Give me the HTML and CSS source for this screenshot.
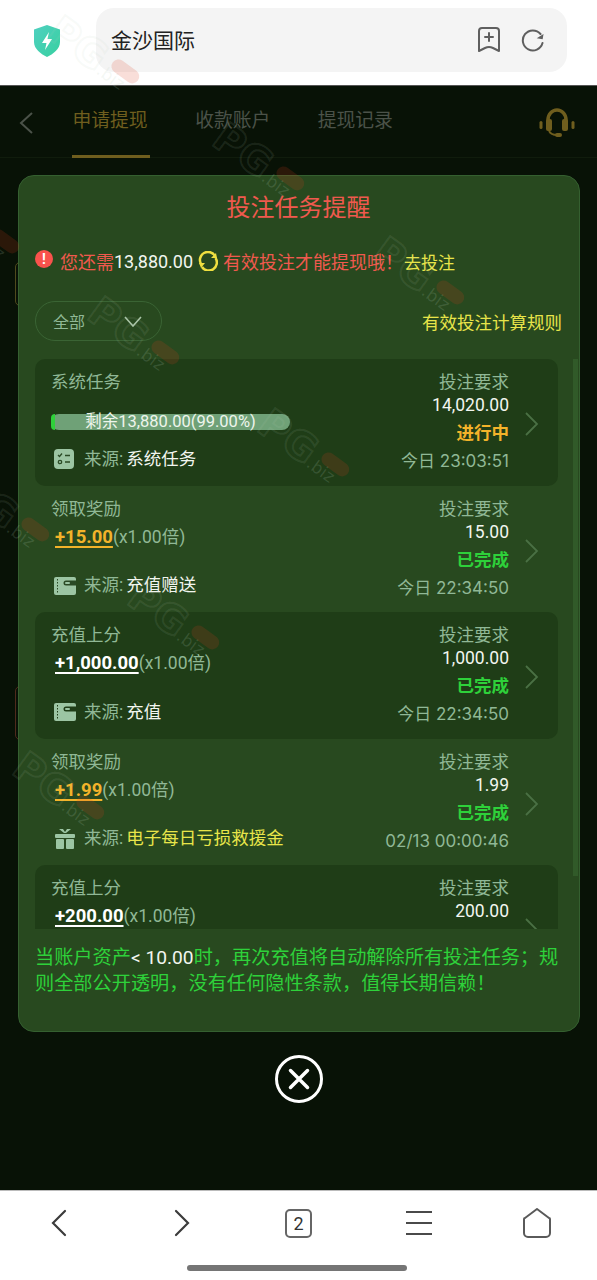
FILE: index.html
```html
<!DOCTYPE html>
<html lang="zh">
<head>
<meta charset="utf-8">
<title>金沙国际</title>
<link rel="stylesheet" href="styles.css">
</head>
<body>
<div class="app">
  <header class="topbar">
    <svg class="shield" width="28" height="34" viewBox="2 0 26 34"><defs><linearGradient id="sg" x1="0" y1="0" x2="1" y2="1"><stop offset="0" stop-color="#4fd0c0"/><stop offset="1" stop-color="#38d0a0"/></linearGradient></defs><path d="M15 1 L28 5.500 V18 C28 25 21 30 15 33 C9 30 2 25 2 18 V5.500 Z" fill="url(#sg)"/><path d="M17 8 L10 19 H14.500 L13 26 L20 15 H15.500 Z" fill="#fff"/></svg>
    <div class="address">
      <span class="address-text">金沙国际</span>
      <svg width="26" height="28" viewBox="0 0 26 28" fill="none" stroke="#5f5f5f" stroke-width="2" stroke-linejoin="round" stroke-linecap="round"><path d="M3 5 a3 3 0 0 1 3 -3 H20 a3 3 0 0 1 3 3 V25 L17 22 Q13 20 9 22 L3 25 Z"/><path d="M13 7 V15 M9 11 H17"/></svg>
      <svg class="reload" width="24" height="24" viewBox="0 0 24 24" fill="none" stroke="#5f5f5f" stroke-width="2" stroke-linecap="round"><path d="M19.500 6 A10 10 0 1 0 21.500 15"/><path d="M16 11 L22 11 L22 5.500 Z" fill="#5f5f5f" stroke="none" transform="rotate(10 20 9)"/></svg>
    </div>
  </header>

  <main class="page">
    <nav class="tabs">
      <svg class="tabs-back" width="14" height="24" viewBox="0 0 14 24" fill="none" stroke="#4b5249" stroke-width="2"><path d="M13 2 L2 12 L13 22"/></svg>
      <span class="tab tab-active">申请提现</span>
      <span class="tab">收款账户</span>
      <span class="tab">提现记录</span>
      <svg class="tabs-support" width="36" height="32" viewBox="0 0 36 32" fill="none"><path d="M9 21 V13 a9 10 0 0 1 18 0 V21" stroke="#6f5e1e" stroke-width="3.500"/><rect x="7" y="12" width="6" height="12" rx="2" fill="#6f5e1e"/><rect x="23" y="12" width="6" height="12" rx="2" fill="#6f5e1e"/><rect x="0.500" y="14" width="3" height="8" rx="1.500" fill="#6f5e1e"/><rect x="32.500" y="14" width="3" height="8" rx="1.500" fill="#6f5e1e"/><path d="M10 24 Q12 28 18 28" stroke="#6f5e1e" stroke-width="1.800"/><rect x="16" y="26" width="7" height="4" rx="2" fill="#6f5e1e"/></svg>
    </nav>
    <span class="bg-stub bg-stub-top"></span>
    <span class="bg-stub bg-stub-low"></span>

    <div class="overlay">
      <section class="modal">
        <h1 class="modal-title">投注任务提醒</h1>
        <div class="notice">
          <span class="notice-icon">!</span>
          <span class="red">您还需</span><span class="white">13,880.00</span>
          <svg class="notice-spin" width="20" height="20" viewBox="0 0 20 20" fill="none" stroke="#f0e040" stroke-width="2.500"><path d="M3 13 A8 8 0 0 1 17 5"/><path d="M17.500 7 A8 8 0 0 1 4 16"/><path d="M1 12 H7 L3 17 Z" fill="#f0e040" stroke="none"/><path d="M13 7 H19 L18 2 Z" fill="#f0e040" stroke="none"/></svg>
          <span class="red">有效投注才能提现哦！</span>
          <span class="yellow notice-go">去投注</span>
        </div>
        <div class="filter">
          <div class="select"><span>全部</span><svg width="18" height="11" viewBox="0 0 18 11" fill="none" stroke="#a9c4a6" stroke-width="1.600"><path d="M1 1 L9 10 L17 1"/></svg></div>
          <span class="yellow rule-link">有效投注计算规则</span>
        </div>

        <div class="list">
          <article class="row row-dark">
            <div class="row-main">
              <div class="muted">系统任务</div>
              <div class="progress"><span class="progress-fill"></span><span class="progress-text">剩余13,880.00(99.00%)</span></div>
              <div class="source">
                <span class="src-box"><svg width="20" height="20" viewBox="0 0 20 20"><rect width="20" height="20" rx="4" fill="#9cc5a3"/><path d="M4 6 L5.500 7.500 L8 4.500 M11 6.500 H16 M11 13 H16" fill="none" stroke="#2a4a25" stroke-width="1.300"/><circle cx="6" cy="13" r="1.700" fill="none" stroke="#2a4a25" stroke-width="1.300"/></svg></span>
                <span class="muted src-label">来源:</span><span class="white">系统任务</span>
              </div>
            </div>
            <div class="row-side">
              <div class="muted">投注要求</div>
              <div class="white">14,020.00</div>
              <div class="state state-doing">进行中</div>
              <div class="muted state-time">今日 23:03:51</div>
            </div>
            <svg class="row-arrow" width="14" height="24" viewBox="0 0 14 24" fill="none" stroke="#4a7044" stroke-width="1.800"><path d="M1 1 L12 12 L1 23"/></svg>
          </article>

          <article class="row">
            <div class="row-main">
              <div class="muted">领取奖励</div>
              <div class="amount-line"><span class="amount amount-gold">+15.00</span><span class="muted">(x1.00倍)</span></div>
              <div class="source">
                <span class="src-box"><svg width="22" height="18" viewBox="0 0 22 18"><rect width="22" height="18" rx="2" fill="#9cc5a3"/><path d="M22 3.500 H12 a2.500 2.500 0 0 0 0 5 H22 Z" fill="#2a4a25"/><rect x="11" y="5" width="5" height="2" rx="1" fill="#9cc5a3"/><path d="M3.500 2 V16" stroke="#2a4a25" stroke-dasharray="1.500 1.500"/></svg></span>
                <span class="muted src-label">来源:</span><span class="white">充值赠送</span>
              </div>
            </div>
            <div class="row-side">
              <div class="muted">投注要求</div>
              <div class="white">15.00</div>
              <div class="state state-done">已完成</div>
              <div class="muted state-time">今日 22:34:50</div>
            </div>
            <svg class="row-arrow" width="14" height="24" viewBox="0 0 14 24" fill="none" stroke="#4a7044" stroke-width="1.800"><path d="M1 1 L12 12 L1 23"/></svg>
          </article>

          <article class="row row-dark">
            <div class="row-main">
              <div class="muted">充值上分</div>
              <div class="amount-line"><span class="amount">+1,000.00</span><span class="muted">(x1.00倍)</span></div>
              <div class="source">
                <span class="src-box"><svg width="22" height="18" viewBox="0 0 22 18"><rect width="22" height="18" rx="2" fill="#9cc5a3"/><path d="M22 3.500 H12 a2.500 2.500 0 0 0 0 5 H22 Z" fill="#1f3d17"/><rect x="11" y="5" width="5" height="2" rx="1" fill="#9cc5a3"/><path d="M3.500 2 V16" stroke="#1f3d17" stroke-dasharray="1.500 1.500"/></svg></span>
                <span class="muted src-label">来源:</span><span class="white">充值</span>
              </div>
            </div>
            <div class="row-side">
              <div class="muted">投注要求</div>
              <div class="white">1,000.00</div>
              <div class="state state-done">已完成</div>
              <div class="muted state-time">今日 22:34:50</div>
            </div>
            <svg class="row-arrow" width="14" height="24" viewBox="0 0 14 24" fill="none" stroke="#4a7044" stroke-width="1.800"><path d="M1 1 L12 12 L1 23"/></svg>
          </article>

          <article class="row">
            <div class="row-main">
              <div class="muted">领取奖励</div>
              <div class="amount-line"><span class="amount amount-gold">+1.99</span><span class="muted">(x1.00倍)</span></div>
              <div class="source">
                <span class="src-box"><svg width="22" height="22" viewBox="0 0 22 22" fill="#9cc5a3"><rect x="1" y="6" width="20" height="4" rx="1"/><rect x="2" y="11" width="8" height="10" rx="1"/><rect x="12" y="11" width="8" height="10" rx="1"/><path d="M10 5 L5 1 H9 L11 4 L13 1 H17 L12 5 Z"/></svg></span>
                <span class="muted src-label">来源:</span><span class="yellow">电子每日亏损救援金</span>
              </div>
            </div>
            <div class="row-side">
              <div class="muted">投注要求</div>
              <div class="white">1.99</div>
              <div class="state state-done">已完成</div>
              <div class="muted state-time">02/13 00:00:46</div>
            </div>
            <svg class="row-arrow" width="14" height="24" viewBox="0 0 14 24" fill="none" stroke="#4a7044" stroke-width="1.800"><path d="M1 1 L12 12 L1 23"/></svg>
          </article>

          <article class="row row-dark">
            <div class="row-main">
              <div class="muted">充值上分</div>
              <div class="amount-line"><span class="amount">+200.00</span><span class="muted">(x1.00倍)</span></div>
            </div>
            <div class="row-side">
              <div class="muted">投注要求</div>
              <div class="white">200.00</div>
            </div>
            <svg class="row-arrow" width="14" height="24" viewBox="0 0 14 24" fill="none" stroke="#4a7044" stroke-width="1.800"><path d="M1 1 L12 12 L1 23"/></svg>
          </article>
        </div>
        <span class="scrollbar"></span>

        <p class="footnote">当账户资产<span class="white">&lt; 10.00</span>时，再次充值将自动解除所有投注任务；规则全部公开透明，没有任何隐性条款，值得长期信赖！</p>
      </section>
      <svg class="close" width="48" height="48" viewBox="0 0 48 48" fill="none" stroke="#fff"><circle cx="24" cy="24" r="22.500" stroke-width="3"/><path d="M15.500 15.500 L32.500 32.500 M32.500 15.500 L15.500 32.500" stroke-width="3.500" stroke-linecap="round"/></svg>
    </div>
  </main>

  <footer class="bottombar">
    <div class="bottom-icons">
      <svg width="18" height="28" viewBox="0 0 18 28" fill="none" stroke="#3c3c3c" stroke-width="2.200" stroke-linecap="round"><path d="M15 2 L3 14 L15 26"/></svg>
      <svg class="icon-forward" width="18" height="28" viewBox="0 0 18 28" fill="none" stroke="#3c3c3c" stroke-width="2.200" stroke-linecap="round"><path d="M3 2 L15 14 L3 26"/></svg>
      <span class="tabcount">2</span>
      <svg width="26" height="26" viewBox="0 0 26 26" fill="none" stroke="#4a4a4a" stroke-width="2"><path d="M0 2 H26 M0 13 H26 M0 24 H26"/></svg>
      <svg class="icon-home" width="28" height="30" viewBox="0 0 28 30" fill="none" stroke="#5a5a5a" stroke-width="2" stroke-linejoin="round"><path d="M14 1 L26 10 a1 1 0 0 1 1 1 V25 a4 4 0 0 1 -4 4 H5 a4 4 0 0 1 -4 -4 V11 a1 1 0 0 1 1 -1 Z"/></svg>
    </div>
    <span class="home-indicator"></span>
  </footer>

  <div class="watermarks" aria-hidden="true">
    <span class="wm wm-1">PG<i>.biz</i></span>
    <span class="wm wm-2">PG<i>.biz</i></span>
    <span class="wm wm-3">PG<i>.biz</i></span>
    <span class="wm wm-4">PG<i>.biz</i></span>
    <span class="wm wm-5">PG<i>.biz</i></span>
    <span class="wm wm-6">PG<i>.biz</i></span>
    <span class="wm wm-7">PG<i>.biz</i></span>
    <span class="wm wm-8">PG<i>.biz</i></span>
    <span class="wm wm-9">PG<i>.biz</i></span>
  </div>
</div>
</body>
</html>
```

FILE: styles.css
```css
* { box-sizing: border-box; }
html, body { margin: 0; padding: 0; }
body {
  font-family: Roboto, "Noto Sans CJK SC", "Noto Sans", sans-serif;
  background: #fff;
}
.app {
  position: relative;
  width: 597px;
  height: 1280px;
  overflow: hidden;
  display: flex;
  flex-direction: column;
}

/* browser top bar */
.topbar {
  height: 85px;
  flex: none;
  display: flex;
  align-items: flex-start;
  background: #fff;
  padding: 8px 30px 0 33px;
  gap: 35px;
}
.shield { margin-top: 16px; flex: none; }
.address {
  flex: 1;
  height: 64px;
  border-radius: 18px;
  background: #f4f4f4;
  display: flex;
  align-items: center;
  padding: 0 22px 0 15px;
  gap: 19px;
}
.address-text { flex: 1; font-size: 21px; color: #222; margin-top: -3px; }

/* dimmed page */
.page {
  position: relative;
  flex: 1;
  background: #081206;
  border-top: 1px solid #555;
}
.tabs {
  height: 72px;
  display: flex;
  align-items: flex-start;
  padding: 23px 22px 0 19px;
  border-bottom: 1px solid #101c0c;
  color: #4b5249;
  font-size: 18.800px;
  gap: 47.500px;
}
.tabs-back { margin-right: -8px; margin-top: 2px; }
.tab { position: relative; line-height: 24px; }
.tab-active { color: #6f5e1e; }
.tab-active::after {
  content: "";
  position: absolute;
  left: -1px;
  right: -2px;
  top: 46px;
  height: 3px;
  background: #6f5e1e;
}
.tabs-support { margin-left: auto; margin-top: -2px; }
.bg-stub {
  position: absolute;
  left: 15px;
  width: 6px;
  border: 1px solid #4f4a1c;
  border-radius: 5px 0 0 5px;
}
.bg-stub-top { top: 176px; height: 44px; }
.bg-stub-low { top: 600px; height: 54px; border-color: #4f2a1c; }

/* modal */
.overlay {
  position: absolute;
  inset: 0;
  padding: 89px 17px 0 18px;
  display: flex;
  flex-direction: column;
  align-items: center;
}
.modal {
  position: relative;
  width: 100%;
  height: 857px;
  background: #28491f;
  border: 1px solid #356030;
  border-radius: 16px;
  padding: 15px 17px 0 16px;
  display: flex;
  flex-direction: column;
  color: #90b896;
}
.modal-title {
  margin: 0;
  font-size: 24px;
  line-height: 34px;
  font-weight: 400;
  text-align: center;
  color: #f0594e;
}
.notice {
  display: flex;
  align-items: center;
  margin-top: 22px;
  height: 28px;
  font-size: 18px;
  white-space: nowrap;
}
.notice-icon {
  width: 18px;
  height: 18px;
  margin-right: 7px;
  margin-top: -4px;
  border-radius: 50%;
  background: #f9524c;
  color: #fff;
  font-size: 14px;
  font-weight: 700;
  line-height: 18px;
  text-align: center;
}
.notice-spin { margin: 0 5px 0 5px; }
.notice-go { margin-left: 1px; font-size: 17px; }
.red { color: #f0594e; }
.white { color: #f2f6f0; }
.yellow { color: #e8e54a; }
.muted { color: #90b896; }

.filter {
  display: flex;
  align-items: center;
  justify-content: space-between;
  margin-top: 26px;
  font-size: 17.500px;
}
.select {
  width: 127px;
  height: 40px;
  border: 1px solid #3a6434;
  border-radius: 20px;
  display: flex;
  align-items: center;
  gap: 39px;
  padding-left: 17px;
  font-size: 16px;
  color: #90b896;
}

.list {
  margin-top: 18px;
  height: 570px;
  overflow: hidden;
  margin-right: 4px;
  flex: none;
}
.row {
  height: 126.500px;
  border-radius: 10px;
  display: flex;
  font-size: 17.500px;
  line-height: 23px;
  padding: 12px 18px 0 16px;
  position: relative;
}
.row-dark { background: #1f3d17; }
.row-main { flex: 1; display: flex; flex-direction: column; }
.row-side {
  text-align: right;
  margin-right: 31px;
  display: flex;
  flex-direction: column;
}
.row-arrow { position: absolute; right: 19px; top: 53px; }
.state { font-weight: 700; margin-top: 5px; }
.state-time {
  margin-top: 5px;
  font-family: Inter, "Noto Sans CJK SC", sans-serif;
  font-size: 17px;
}
.state-doing { color: #f3b32a; }
.state-done { color: #2ed13a; }

.progress {
  position: relative;
  width: 239px;
  height: 16px;
  margin-top: 20px;
  border-radius: 8px;
  background: #6fa177;
  text-align: center;
  font-size: 16.500px;
  line-height: 16px;
  color: #eef5ec;
}
.progress-fill {
  position: absolute;
  left: 0;
  top: 0;
  bottom: 0;
  width: 4px;
  border-radius: 8px 0 0 8px;
  background: #2ed13a;
}
.progress-text { position: relative; white-space: nowrap; }

.amount-line { margin-top: 5px; padding-left: 4px; }
.amount {
  font-size: 18.500px;
  font-weight: 700;
  color: #fff;
  text-decoration: underline;
  text-decoration-thickness: 2px;
  text-underline-offset: 3px;
  text-decoration-skip-ink: auto;
}
.amount-gold { color: #f3b32a; }
.source {
  margin-top: auto;
  margin-bottom: 15px;
  display: flex;
  align-items: center;
  padding-left: 3px;
}
.src-box { width: 30px; flex: none; display: flex; align-items: center; }
.src-label { margin-right: 3px; }

.scrollbar {
  position: absolute;
  right: 1px;
  top: 183px;
  width: 5px;
  height: 517px;
  background: #315a29;
}
.footnote {
  margin: 16px 0 0;
  font-size: 19.200px;
  line-height: 26px;
  color: #2ed13a;
}
.close { margin: 23px 0 0; flex: none; }

/* browser bottom bar */
.bottombar {
  height: 90px;
  flex: none;
  background: #fff;
  border-top: 1px solid #bbb;
  display: flex;
  flex-direction: column;
  align-items: center;
}
.bottom-icons {
  width: 100%;
  display: grid;
  grid-template-columns: repeat(5, 120px);
  justify-content: center;
  justify-items: center;
  align-items: center;
  height: 52px;
  margin-top: 6px;
}
.icon-forward { margin-left: 6px; }
.icon-home { margin-right: 3px; }
.tabcount {
  width: 27px;
  height: 29px;
  border: 2px solid #666;
  border-radius: 5px;
  text-align: center;
  font-size: 18px;
  line-height: 25px;
  color: #333;
}
.home-indicator {
  margin: 16px 4px 0 0;
  width: 220px;
  height: 6px;
  border-radius: 3px;
  background: #757575;
}

/* watermarks lying over everything */
.watermarks { position: absolute; inset: 0; pointer-events: none; }
.wm {
  position: absolute;
  font-family: "DejaVu Sans", sans-serif;
  font-size: 40px;
  font-weight: 700;
  line-height: 1;
  color: transparent;
  -webkit-text-stroke: 2px rgba(190, 210, 190, 0.11);
  transform: rotate(36deg);
  transform-origin: 0 0;
  white-space: nowrap;
}
.wm i {
  font-style: normal;
  font-size: 17px;
  font-weight: 400;
  color: rgba(190, 210, 190, 0.16);
  -webkit-text-stroke: 0;
}
.wm::after {
  content: "";
  position: absolute;
  left: 70px;
  top: 8px;
  width: 31px;
  height: 14px;
  border-radius: 7px;
  background: rgba(220, 60, 30, 0.17);
}
.wm-1 { left: 65px; top: 9px; }
.wm-2 { left: 230px; top: 116px; }
.wm-3 { left: 390px; top: 230px; }
.wm-4 { left: 105px; top: 290px; }
.wm-5 { left: 275px; top: 402px; }
.wm-6 { left: -25px; top: 467px; }
.wm-7 { left: 145px; top: 575px; }
.wm-8 { left: 30px; top: 745px; }
.wm-9 { left: -55px; top: 179px; }
```
